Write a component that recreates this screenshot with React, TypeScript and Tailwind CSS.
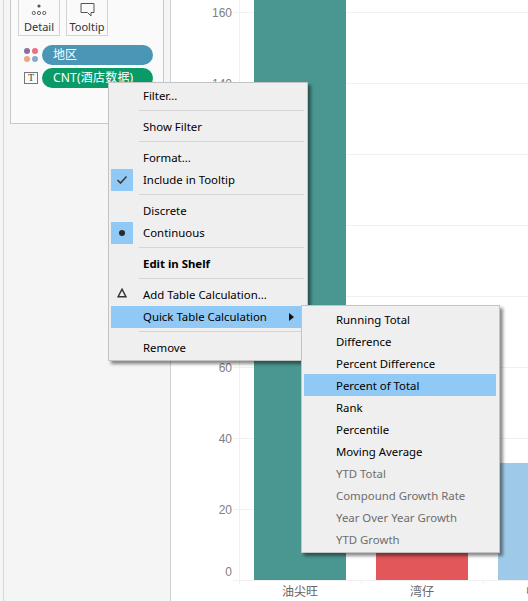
import React from 'react';

const uiFont = "font-['Noto_Sans','Noto_Sans_CJK_SC',sans-serif]";

type MenuRow = { label: string; bold?: boolean; mark?: 'check' | 'dot' | 'delta'; active?: boolean; arrow?: boolean };

const mainMenu: (MenuRow | 'sep')[] = [
  { label: 'Filter...' },
  'sep',
  { label: 'Show Filter' },
  'sep',
  { label: 'Format...' },
  { label: 'Include in Tooltip', mark: 'check' },
  'sep',
  { label: 'Discrete' },
  { label: 'Continuous', mark: 'dot' },
  'sep',
  { label: 'Edit in Shelf', bold: true },
  'sep',
  { label: 'Add Table Calculation...', mark: 'delta' },
  { label: 'Quick Table Calculation', active: true, arrow: true },
  'sep',
  { label: 'Remove' },
];

const subMenu = [
  { label: 'Running Total' },
  { label: 'Difference' },
  { label: 'Percent Difference' },
  { label: 'Percent of Total', active: true },
  { label: 'Rank' },
  { label: 'Percentile' },
  { label: 'Moving Average' },
  { label: 'YTD Total', off: true },
  { label: 'Compound Growth Rate', off: true },
  { label: 'Year Over Year Growth', off: true },
  { label: 'YTD Growth', off: true },
];

const ticks = [
  { label: '160', top: 12 },
  { label: '140', top: 83 },
  { label: '120', top: 154 },
  { label: '100', top: 225 },
  { label: '80', top: 296 },
  { label: '60', top: 367 },
  { label: '40', top: 438 },
  { label: '20', top: 509 },
  { label: '0', top: 571 },
];

const Mark = ({ mark }: { mark?: MenuRow['mark'] }) => {
  if (mark === 'check') {
    return (
      <div className="w-[22px] h-[22px] bg-[#90c8f6] flex items-center justify-center">
        <svg width="12" height="10" viewBox="0 0 12 10" fill="none" stroke="#3c3c3c" strokeWidth="1.6">
          <path d="M1.5 5 L4.5 8 L10.5 1.5" />
        </svg>
      </div>
    );
  }
  if (mark === 'dot') {
    return (
      <div className="w-[22px] h-[22px] bg-[#90c8f6] flex items-center justify-center">
        <div className="w-[6px] h-[6px] rounded-full bg-[#2a2a2a]" />
      </div>
    );
  }
  if (mark === 'delta') {
    return (
      <div className="w-[22px] h-[22px] flex items-center justify-center pb-1">
        <svg width="10" height="10" viewBox="0 0 10 10" fill="none" stroke="#333" strokeWidth="1.4">
          <path d="M5 1.2 L9 8.8 L1 8.8 Z" />
        </svg>
      </div>
    );
  }
  return <div className="w-[22px] h-[22px]" />;
};

const ContextMenu = () => (
  <div className="absolute left-[108px] top-[82px] w-[200px] h-[279px] bg-[#efefef] border border-[#c4c4c4] pt-[2px] px-[2px] shadow-[3px_3px_3px_rgba(0,0,0,0.45)]">
    {mainMenu.map((row, i) =>
      row === 'sep' ? (
        <div key={i} className="h-[9px] pt-[3px] pl-[28px] pr-[1px]">
          <div className="w-full h-px bg-[#d6d6d6]" />
        </div>
      ) : (
        <div key={i} className={`h-[22px] flex items-center ${row.active ? 'bg-[#90c8f6]' : ''}`}>
          <Mark mark={row.mark} />
          <span className={`ml-[10px] text-[11.4px] leading-[22px] text-black whitespace-nowrap ${row.bold ? 'font-bold' : ''}`}>
            {row.label}
          </span>
          {row.arrow && (
            <svg className="ml-auto mr-[11px]" width="5" height="8" viewBox="0 0 5 8" fill="#111">
              <path d="M0 0 L5 4 L0 8 Z" />
            </svg>
          )}
        </div>
      )
    )}
  </div>
);

const QuickMenu = () => (
  <div className="absolute left-[301px] top-[305px] w-[199px] h-[248px] bg-[#efefef] border border-[#c4c4c4] pt-[2px] pl-[2px] pr-[3px] shadow-[3px_3px_3px_rgba(0,0,0,0.45)]">
    {subMenu.map((row) => (
      <div
        key={row.label}
        className={`h-[22px] pl-[32px] pt-px text-[11.4px] leading-[22px] whitespace-nowrap ${row.active ? 'bg-[#90c8f6]' : ''} ${row.off ? 'text-[#6d6d6d]' : 'text-black'}`}
      >
        {row.label}
      </div>
    ))}
  </div>
);

const MarkButton = ({ label, icon }: { label: string; icon: React.ReactNode }) => (
  <div className="w-[42px] h-[36px] border border-t-0 border-[#d4d4d4] flex flex-col items-center">
    <div className="h-[19px] flex items-center justify-center">{icon}</div>
    <span className="text-[11px] leading-[15px] text-[#333]">{label}</span>
  </div>
);

const MarksCard = () => (
  <div className="ml-[6px] w-[154px] h-[124px] border border-t-0 border-[#c8c8c8] bg-[#fafafa] pl-[7px]">
    <div className="flex gap-[6px]">
      <MarkButton
        label="Detail"
        icon={
          <svg width="16" height="12" viewBox="0 0 16 12" fill="none" stroke="#555" strokeWidth="0.9">
            <circle cx="8" cy="2" r="1.6" fill="#555" stroke="none" />
            <circle cx="2.8" cy="9" r="1.6" />
            <circle cx="8" cy="9" r="1.6" />
            <circle cx="13.2" cy="9" r="1.6" />
          </svg>
        }
      />
      <MarkButton
        label="Tooltip"
        icon={
          <svg width="15" height="15" viewBox="0 0 15 15" fill="none" stroke="#555" strokeWidth="1">
            <path d="M1 1.5 H14 V10.5 H11 V14 L7.5 10.5 H1 Z" />
          </svg>
        }
      />
    </div>
    <div className="mt-[9px] flex items-center gap-[4px] h-[20px] -ml-px">
      <div className="w-[14px] ml-[7px] grid grid-cols-2 gap-[2px]">
        <div className="w-[6px] h-[6px] rounded-full bg-[#8c6d9c]" />
        <div className="w-[6px] h-[6px] rounded-full bg-[#ee6f85]" />
        <div className="w-[6px] h-[6px] rounded-full bg-[#f0a47c]" />
        <div className="w-[6px] h-[6px] rounded-full bg-[#88a9cb]" />
      </div>
      <div className="w-[111px] h-[20px] rounded-full bg-[#4a96b6] pl-[11px] text-[12px] leading-[20px] text-white">地区</div>
    </div>
    <div className="mt-[3px] flex items-center gap-[4px] h-[20px] -ml-px">
      <div className="ml-[7px] w-[14px] h-[12px] border border-[#777] flex items-center justify-center text-[10px] leading-none font-['Liberation_Serif',serif] text-[#444]">T</div>
      <div className="w-[111px] h-[20px] rounded-full bg-[#0a9a68] pl-[11px] text-[12px] tracking-[0.2px] leading-[20px] text-white whitespace-nowrap">CNT(酒店数据)</div>
    </div>
  </div>
);

const Chart = () => (
  <div className="relative flex-1 h-full bg-white border-l border-[#d2d2d2] overflow-hidden">
    {ticks.slice(0, 8).map((t) => (
      <div key={t.label} className="absolute left-[62px] right-0 h-px bg-[#f0f0f0]" style={{ top: t.top }} />
    ))}
    <div className="absolute left-[62px] right-0 top-[580px] h-px bg-[#f0f0f0]" />
    <div className="absolute left-[68px] top-0 h-[584px] w-px bg-[#f0f0f0]" />
    <div className="absolute left-[190px] top-[580px] h-[4px] w-px bg-[#f0f0f0]" />
    <div className="absolute left-[312px] top-[580px] h-[4px] w-px bg-[#f0f0f0]" />
    {ticks.map((t) => (
      <div
        key={t.label}
        className="absolute right-[296px] text-[12px] leading-[16px] text-[#808080] font-['Liberation_Sans',sans-serif]"
        style={{ top: t.top - 7 }}
      >
        {t.label}
      </div>
    ))}
    <div className="absolute left-[83px] top-0 h-[580px] flex items-end gap-[30px]">
      <div className="w-[92px] h-full bg-[#4a9792]" />
      <div className="w-[92px] h-[60px] bg-[#e2575a]" />
      <div className="w-[92px] h-[117px] bg-[#9fc9e8]" />
    </div>
    <div className="absolute left-[83px] top-[584px] flex gap-[30px] text-[12px] leading-[16px] text-[#666]">
      <div className="w-[92px] text-center">油尖旺</div>
      <div className="w-[92px] text-center">湾仔</div>
      <div className="w-[92px] text-center">中西区</div>
    </div>
  </div>
);

export default function App() {
  return (
    <div className={`relative w-[528px] h-[601px] overflow-hidden flex bg-[#f5f5f5] ${uiFont}`}>
      <div className="ml-[3px] w-[167px] shrink-0 border-l border-[#d8d8d8]">
        <MarksCard />
      </div>
      <Chart />
      <ContextMenu />
      <QuickMenu />
    </div>
  );
}
